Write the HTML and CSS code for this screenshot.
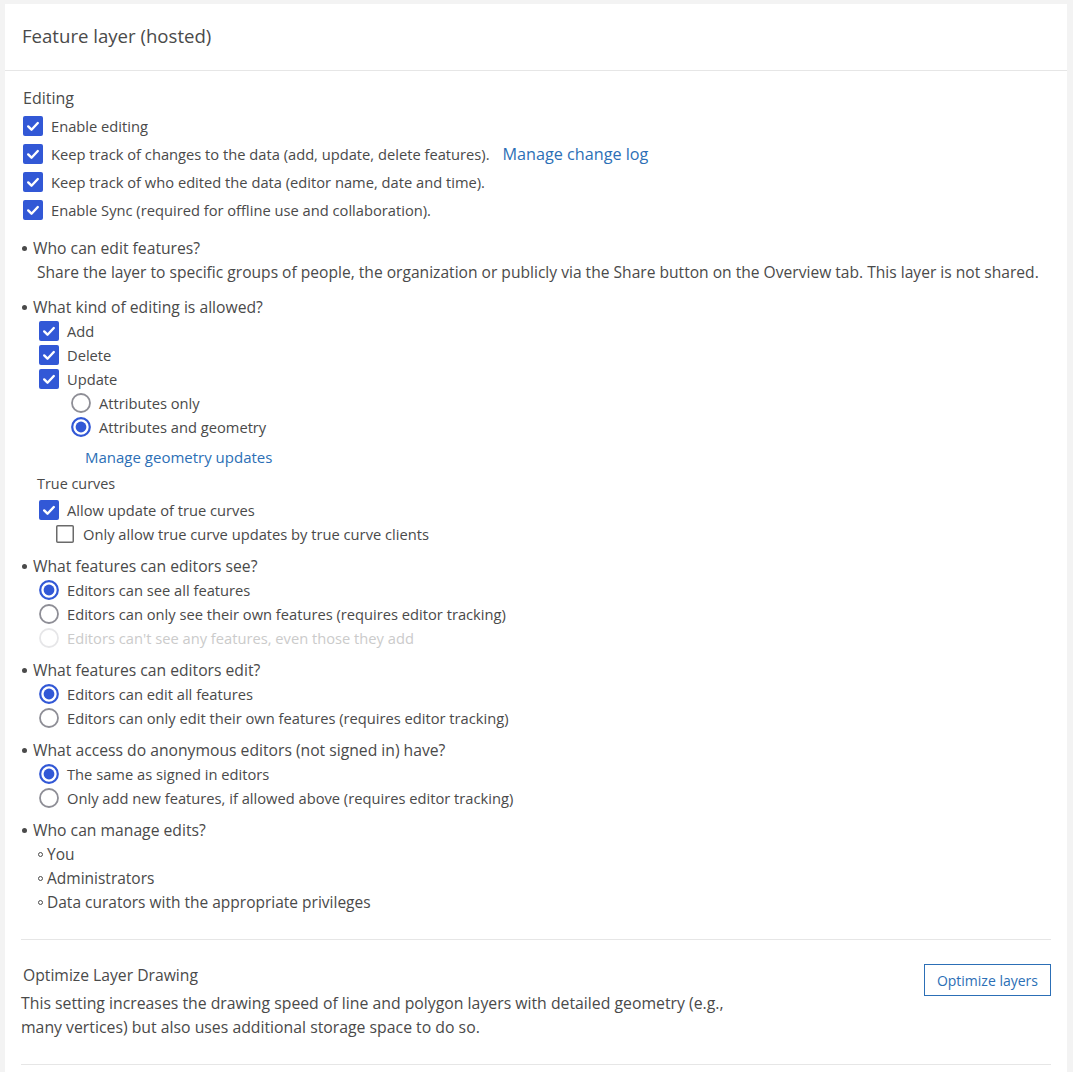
FILE: index.html
```html
<!DOCTYPE html>
<html lang="en">
<head>
<meta charset="utf-8">
<title>Feature layer (hosted)</title>
<link rel="stylesheet" href="styles.css">
</head>
<body>
<div class="page">
  <div class="card">
    <div class="card-header">
      <h1 class="title">Feature layer (hosted)</h1>
    </div>
    <div class="card-body">
      <section class="editing">
        <h2 class="section-title">Editing</h2>
        <div class="opt tall">
          <svg class="ctl" viewBox="0 0 20 20"><rect width="20" height="20" rx="2" fill="#3258d6"/><path d="M5.2 10.4l3.3 3.3L14.8 7" stroke="#fff" stroke-width="2.4" fill="none" stroke-linecap="round" stroke-linejoin="round"/></svg>
          <span>Enable editing</span>
        </div>
        <div class="opt tall">
          <svg class="ctl" viewBox="0 0 20 20"><rect width="20" height="20" rx="2" fill="#3258d6"/><path d="M5.2 10.4l3.3 3.3L14.8 7" stroke="#fff" stroke-width="2.4" fill="none" stroke-linecap="round" stroke-linejoin="round"/></svg>
          <span>Keep track of changes to the data (add, update, delete features).</span>
          <a class="link change-log" href="#">Manage change log</a>
        </div>
        <div class="opt tall">
          <svg class="ctl" viewBox="0 0 20 20"><rect width="20" height="20" rx="2" fill="#3258d6"/><path d="M5.2 10.4l3.3 3.3L14.8 7" stroke="#fff" stroke-width="2.4" fill="none" stroke-linecap="round" stroke-linejoin="round"/></svg>
          <span>Keep track of who edited the data (editor name, date and time).</span>
        </div>
        <div class="opt tall">
          <svg class="ctl" viewBox="0 0 20 20"><rect width="20" height="20" rx="2" fill="#3258d6"/><path d="M5.2 10.4l3.3 3.3L14.8 7" stroke="#fff" stroke-width="2.4" fill="none" stroke-linecap="round" stroke-linejoin="round"/></svg>
          <span>Enable Sync (required for offline use and collaboration).</span>
        </div>
      </section>

      <div class="q q1">
        <div class="q-title"><span class="dot"></span>Who can edit features?</div>
        <div class="q-body">
          <p class="desc">Share the layer to specific groups of people, the organization or publicly via the Share button on the Overview tab. This layer is not shared.</p>
        </div>
      </div>

      <div class="q q2">
        <div class="q-title"><span class="dot"></span>What kind of editing is allowed?</div>
        <div class="q-body">
          <div class="opt">
            <svg class="ctl" viewBox="0 0 20 20"><rect width="20" height="20" rx="2" fill="#3258d6"/><path d="M5.2 10.4l3.3 3.3L14.8 7" stroke="#fff" stroke-width="2.4" fill="none" stroke-linecap="round" stroke-linejoin="round"/></svg>
            <span>Add</span>
          </div>
          <div class="opt">
            <svg class="ctl" viewBox="0 0 20 20"><rect width="20" height="20" rx="2" fill="#3258d6"/><path d="M5.2 10.4l3.3 3.3L14.8 7" stroke="#fff" stroke-width="2.4" fill="none" stroke-linecap="round" stroke-linejoin="round"/></svg>
            <span>Delete</span>
          </div>
          <div class="opt">
            <svg class="ctl" viewBox="0 0 20 20"><rect width="20" height="20" rx="2" fill="#3258d6"/><path d="M5.2 10.4l3.3 3.3L14.8 7" stroke="#fff" stroke-width="2.4" fill="none" stroke-linecap="round" stroke-linejoin="round"/></svg>
            <span>Update</span>
          </div>
          <div class="opt sub">
            <svg class="ctl" viewBox="0 0 20 20"><circle cx="10" cy="10" r="9" fill="#fff" stroke="#8e8e96" stroke-width="1.8"/></svg>
            <span>Attributes only</span>
          </div>
          <div class="opt sub">
            <svg class="ctl" viewBox="0 0 20 20"><circle cx="10" cy="10" r="8.8" fill="#fff" stroke="#3258d6" stroke-width="2.2"/><circle cx="10" cy="10" r="5.4" fill="#3258d6"/></svg>
            <span>Attributes and geometry</span>
          </div>
          <a class="link geo-link" href="#">Manage geometry updates</a>
          <div class="subhead">True curves</div>
          <div class="opt curves">
            <svg class="ctl" viewBox="0 0 20 20"><rect width="20" height="20" rx="2" fill="#3258d6"/><path d="M5.2 10.4l3.3 3.3L14.8 7" stroke="#fff" stroke-width="2.4" fill="none" stroke-linecap="round" stroke-linejoin="round"/></svg>
            <span>Allow update of true curves</span>
          </div>
          <div class="opt only">
            <svg class="ctl small" viewBox="0 0 18 18"><rect x="0.75" y="0.75" width="16.5" height="16.5" rx="1" fill="#fff" stroke="#6a6a6a" stroke-width="1.5"/></svg>
            <span>Only allow true curve updates by true curve clients</span>
          </div>
        </div>
      </div>

      <div class="q">
        <div class="q-title"><span class="dot"></span>What features can editors see?</div>
        <div class="q-body">
          <div class="opt">
            <svg class="ctl" viewBox="0 0 20 20"><circle cx="10" cy="10" r="8.8" fill="#fff" stroke="#3258d6" stroke-width="2.2"/><circle cx="10" cy="10" r="5.4" fill="#3258d6"/></svg>
            <span>Editors can see all features</span>
          </div>
          <div class="opt">
            <svg class="ctl" viewBox="0 0 20 20"><circle cx="10" cy="10" r="9" fill="#fff" stroke="#8e8e96" stroke-width="1.8"/></svg>
            <span>Editors can only see their own features (requires editor tracking)</span>
          </div>
          <div class="opt disabled">
            <svg class="ctl" viewBox="0 0 20 20"><circle cx="10" cy="10" r="9" fill="#fff" stroke="#e6e6e8" stroke-width="1.8"/></svg>
            <span>Editors can't see any features, even those they add</span>
          </div>
        </div>
      </div>

      <div class="q">
        <div class="q-title"><span class="dot"></span>What features can editors edit?</div>
        <div class="q-body">
          <div class="opt">
            <svg class="ctl" viewBox="0 0 20 20"><circle cx="10" cy="10" r="8.8" fill="#fff" stroke="#3258d6" stroke-width="2.2"/><circle cx="10" cy="10" r="5.4" fill="#3258d6"/></svg>
            <span>Editors can edit all features</span>
          </div>
          <div class="opt">
            <svg class="ctl" viewBox="0 0 20 20"><circle cx="10" cy="10" r="9" fill="#fff" stroke="#8e8e96" stroke-width="1.8"/></svg>
            <span>Editors can only edit their own features (requires editor tracking)</span>
          </div>
        </div>
      </div>

      <div class="q">
        <div class="q-title"><span class="dot"></span>What access do anonymous editors (not signed in) have?</div>
        <div class="q-body">
          <div class="opt">
            <svg class="ctl" viewBox="0 0 20 20"><circle cx="10" cy="10" r="8.8" fill="#fff" stroke="#3258d6" stroke-width="2.2"/><circle cx="10" cy="10" r="5.4" fill="#3258d6"/></svg>
            <span>The same as signed in editors</span>
          </div>
          <div class="opt">
            <svg class="ctl" viewBox="0 0 20 20"><circle cx="10" cy="10" r="9" fill="#fff" stroke="#8e8e96" stroke-width="1.8"/></svg>
            <span>Only add new features, if allowed above (requires editor tracking)</span>
          </div>
        </div>
      </div>

      <div class="q">
        <div class="q-title"><span class="dot"></span>Who can manage edits?</div>
        <ul class="sublist">
          <li><span class="ring"></span>You</li>
          <li><span class="ring"></span>Administrators</li>
          <li><span class="ring"></span>Data curators with the appropriate privileges</li>
        </ul>
      </div>

      <div class="divider"></div>

      <section class="optimize">
        <div class="optimize-text">
          <h3 class="optimize-title">Optimize Layer Drawing</h3>
          <p class="optimize-desc">This setting increases the drawing speed of line and polygon layers with detailed geometry (e.g., many vertices) but also uses additional storage space to do so.</p>
        </div>
        <button class="btn-outline" type="button">Optimize layers</button>
      </section>

      <div class="divider bottom"></div>
    </div>
  </div>
</div>
</body>
</html>
```

FILE: styles.css
```css
* { box-sizing: border-box; }

html, body {
  margin: 0;
  padding: 0;
  background: #f3f3f3;
}

body {
  font-family: "Open Sans", "Noto Sans", "DejaVu Sans", sans-serif;
  font-size: 15px;
  color: #4a4a4a;
  line-height: 24px;
}

.page {
  padding: 4px 6px 0 5px;
}

.card {
  background: #fff;
  min-height: 1068px;
}

.card-header {
  height: 67px;
  border-bottom: 1px solid #e6e6e6;
  display: flex;
  align-items: center;
  padding: 0 17px 2px;
}

.title {
  margin: 0;
  font-size: 18.6px;
  font-weight: 400;
  color: #4a4a4a;
  line-height: 28px;
}

.card-body {
  padding: 0 16px;
}

.editing {
  padding-left: 2px;
  padding-top: 15px;
}

.section-title {
  margin: 0 0 2px;
  font-size: 16px;
  font-weight: 400;
  line-height: 24px;
}

.opt {
  display: flex;
  align-items: center;
  height: 24px;
  margin-left: 2px;
  white-space: nowrap;
  font-size: 14.7px;
}

.editing .opt { margin-left: 0; }

.opt.tall { height: 28px; }

.ctl {
  width: 20px;
  height: 20px;
  flex: none;
  margin-right: 8px;
  display: block;
}

.ctl.small {
  width: 18px;
  height: 18px;
  margin-right: 9px;
}

.link {
  color: #2c6fb6;
  text-decoration: none;
}

.change-log {
  margin-left: 13px;
  font-size: 16.2px;
}

.geo-link { font-size: 15px; }

.q { margin-top: 8px; }
.q1 { margin-top: 12px; }
.q2 { margin-top: 11px; }

.q-title {
  display: flex;
  align-items: center;
  padding-left: 1px;
  font-size: 15.7px;
}

.dot {
  width: 5px;
  height: 5px;
  border-radius: 50%;
  background: #4a4a4a;
  margin-right: 6px;
  margin-left: 0;
  flex: none;
}

.q-body {
  padding-left: 16px;
}

.desc {
  margin: 0;
  font-size: 15.6px;
}

.opt.sub { margin-left: 34px; }

.geo-link {
  display: block;
  margin-top: 6px;
  padding-left: 48px;
}

.subhead {
  margin-top: 5px;
  font-size: 14.4px;
  line-height: 20px;
}

.opt.curves { margin-top: 4px; }

.opt.only { margin-left: 19px; }

.opt.disabled { color: #cbcbcb; }

.sublist {
  list-style: none;
  margin: 0;
  padding: 0 0 0 16px;
  font-size: 15.5px;
}

.sublist li {
  display: flex;
  align-items: center;
  height: 24px;
}

.ring {
  width: 5px;
  height: 5px;
  border: 1px solid #4a4a4a;
  border-radius: 50%;
  margin-left: 1px;
  margin-right: 4px;
  flex: none;
}

.divider {
  border-top: 1px solid #e6e6e6;
  margin-top: 25px;
}

.optimize {
  display: flex;
  justify-content: space-between;
  align-items: flex-start;
  margin-top: 23px;
}

.optimize-text { max-width: 730px; }

.optimize-title {
  margin: 0 0 4px;
  padding-left: 2px;
  font-size: 15.7px;
  font-weight: 400;
  line-height: 24px;
}

.optimize-desc {
  margin: 0;
  font-size: 15.8px;
}

.btn-outline {
  margin-top: 1px;
  height: 32px;
  padding: 0 12px;
  border: 1px solid #2c6fb6;
  background: #fff;
  color: #2c6fb6;
  font-family: inherit;
  font-size: 14px;
  border-radius: 0;
}
```
